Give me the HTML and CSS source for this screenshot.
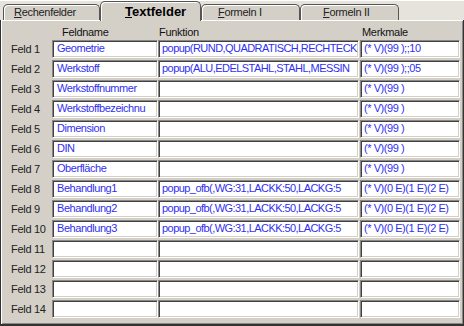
FILE: index.html
```html
<!DOCTYPE html>
<html lang="de">
<head>
<meta charset="UTF-8">
<title>Textfelder</title>
<link rel="stylesheet" href="styles.css">
</head>
<body>
<div class="tabs">
  <div class="tab t1"><u>R</u>echenfelder</div>
  <div class="tab t2 active"><u>T</u>extfelder</div>
  <div class="tab t3"><u>F</u>ormeln I</div>
  <div class="tab t4"><u>F</u>ormeln II</div>
</div>

<div class="panel">
  <div class="grid">
    <div></div>
    <div class="head h1">Feldname</div>
    <div class="head h2">Funktion</div>
    <div class="head h3">Merkmale</div>

    <div class="lbl">Feld 1</div>
    <div class="box b1">Geometrie</div>
    <div class="box b2">popup(RUND,QUADRATISCH,RECHTECK</div>
    <div class="box b3">(* V)(99 );;10</div>

    <div class="lbl">Feld 2</div>
    <div class="box b1">Werkstoff</div>
    <div class="box b2">popup(ALU,EDELSTAHL,STAHL,MESSIN</div>
    <div class="box b3">(* V)(99 );;05</div>

    <div class="lbl">Feld 3</div>
    <div class="box b1">Werkstoffnummer</div>
    <div class="box b2"></div>
    <div class="box b3">(* V)(99 )</div>

    <div class="lbl">Feld 4</div>
    <div class="box b1">Werkstoffbezeichnu</div>
    <div class="box b2"></div>
    <div class="box b3">(* V)(99 )</div>

    <div class="lbl">Feld 5</div>
    <div class="box b1">Dimension</div>
    <div class="box b2"></div>
    <div class="box b3">(* V)(99 )</div>

    <div class="lbl">Feld 6</div>
    <div class="box b1">DIN</div>
    <div class="box b2"></div>
    <div class="box b3">(* V)(99 )</div>

    <div class="lbl">Feld 7</div>
    <div class="box b1">Oberfläche</div>
    <div class="box b2"></div>
    <div class="box b3">(* V)(99 )</div>

    <div class="lbl">Feld 8</div>
    <div class="box b1">Behandlung1</div>
    <div class="box b2">popup_ofb(,WG:31,LACKK:50,LACKG:5</div>
    <div class="box b3">(* V)(0 E)(1 E)(2 E)</div>

    <div class="lbl">Feld 9</div>
    <div class="box b1">Behandlung2</div>
    <div class="box b2">popup_ofb(,WG:31,LACKK:50,LACKG:5</div>
    <div class="box b3">(* V)(0 E)(1 E)(2 E)</div>

    <div class="lbl">Feld 10</div>
    <div class="box b1">Behandlung3</div>
    <div class="box b2">popup_ofb(,WG:31,LACKK:50,LACKG:5</div>
    <div class="box b3">(* V)(0 E)(1 E)(2 E)</div>

    <div class="lbl">Feld 11</div>
    <div class="box b1"></div>
    <div class="box b2"></div>
    <div class="box b3"></div>

    <div class="lbl">Feld 12</div>
    <div class="box b1"></div>
    <div class="box b2"></div>
    <div class="box b3"></div>

    <div class="lbl">Feld 13</div>
    <div class="box b1"></div>
    <div class="box b2"></div>
    <div class="box b3"></div>

    <div class="lbl">Feld 14</div>
    <div class="box b1"></div>
    <div class="box b2"></div>
    <div class="box b3"></div>
  </div>
</div>
</body>
</html>
```

FILE: styles.css
```css
html, body { margin: 0; padding: 0; }
body { width: 464px; height: 326px; background: #e6e3dd; font-family: "Liberation Sans", Arial, sans-serif; font-size: 11px; letter-spacing: -0.3px; color: #111; overflow: hidden; border-top: 1px solid #fff; box-sizing: border-box; }

.tabs { display: flex; height: 19px; padding-left: 3px; align-items: flex-end; position: relative; z-index: 2; }
.tab { height: 16px; box-sizing: border-box; background: #d4d0c8; border: 1px solid #555; border-bottom: none; border-radius: 5px 5px 0 0; box-shadow: inset 1px 1px 0 #fff; line-height: 15px; padding-left: 10px; color: #222; white-space: nowrap; }
.tab u { text-decoration: underline; }
.t1 { width: 97px; }
.t2 { width: 101px; }
.t3 { width: 99px; padding-left: 16px; }
.t4 { width: 99px; padding-left: 22px; }
.tab.active { height: 20px; margin-bottom: -1px; font-weight: bold; font-size: 13px; letter-spacing: 0; line-height: 20px; padding-left: 24px; color: #000; }

.panel { height: 306px; box-sizing: border-box; background: #d4d0c8; border-left: 1px solid #333; border-right: 1px solid #333; border-bottom: 2px solid #333; box-shadow: inset 1px 1px 0 #fff, inset -1px -1px 0 #888; }

.grid { display: grid; grid-template-columns: 50px 106px 202px 100px; grid-template-rows: 20px; grid-auto-rows: 20px; padding-left: 1px; }

.head { padding-top: 6px; color: #111; }
.h1 { padding-left: 10px; }
.h2 { padding-left: 1px; }
.h3 { padding-left: 2px; }

.lbl { padding-left: 9px; line-height: 18px; color: #222; }

.box { height: 18px; box-sizing: border-box; background: #fff; border-top: 1px solid #888; border-left: 1px solid #888; border-bottom: 1px solid #fff; border-right: 1px solid #fff; box-shadow: inset 1px 1px 0 #404040, inset -1px -1px 0 #d4d0c8; color: #2f2ff2; padding-left: 4px; line-height: 15px; letter-spacing: -0.45px; white-space: nowrap; overflow: hidden; }
.b1 { width: 106px; }
.b2 { width: 201px; padding-left: 3px; letter-spacing: -0.55px; }
.b3 { width: 100px; padding-left: 3px; }
```
